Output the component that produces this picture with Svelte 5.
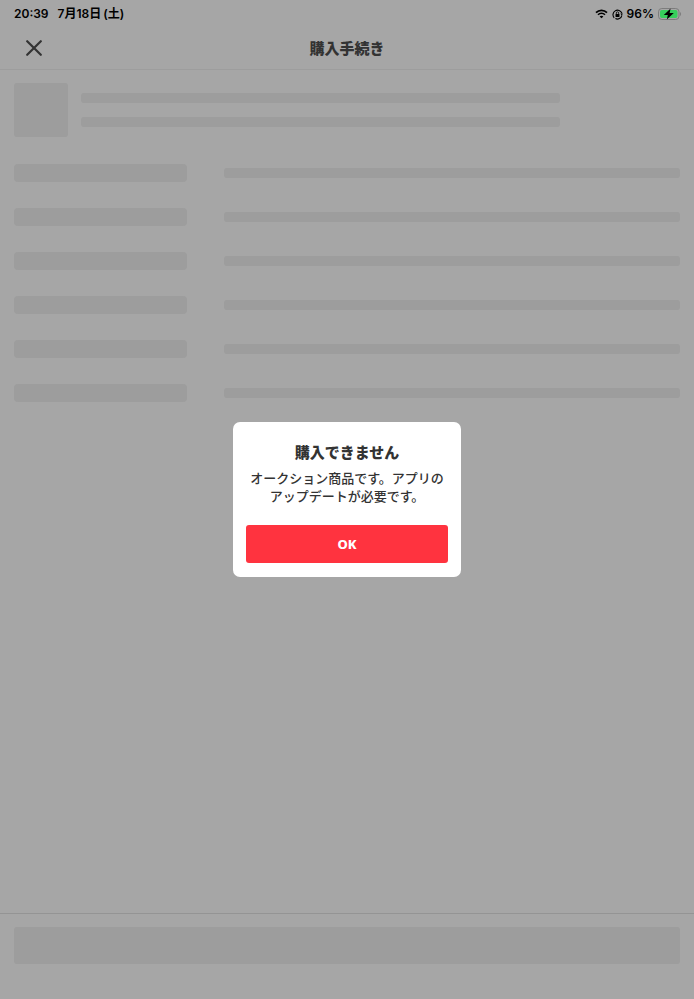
<script>
    let open = $state(true);

    const rows = [1, 2, 3, 4, 5, 6];
</script>

<div class="screen">
    <div class="status-bar">
        <div class="status-left">
            <span>20:39</span>
            <span>7月18日&thinsp;(土)</span>
        </div>
        <div class="status-right">
            <svg width="13" height="10" viewBox="0 0 13 10" aria-hidden="true">
                <path d="M1 3.6 C4 0.5 9 0.5 12 3.6" fill="none" stroke="#000" stroke-width="1.7" />
                <path d="M3 5.8 C5 3.8 8 3.8 10 5.8" fill="none" stroke="#000" stroke-width="1.6" />
                <path d="M6.5 9.3 L4.6 7.4 C5.6 6.4 7.4 6.4 8.4 7.4 Z" />
            </svg>
            <svg width="11" height="11" viewBox="0 0 11 11" aria-hidden="true">
                <path d="M2.2 8.9 A4.6 4.6 0 1 1 9.9 4.2 M9.9 6.4 A4.6 4.6 0 0 1 3.4 9.6" fill="none" stroke="#000" stroke-width="1.1" />
                <path d="M8.3 4.6 L10.9 4.6 L9.8 6.6 Z" />
                <rect x="3.5" y="4.9" width="4" height="3.1" rx="0.4" />
                <path d="M4.3 5 V4 A1.2 1.2 0 0 1 6.7 4 V5" fill="none" stroke="#000" stroke-width="0.8" />
            </svg>
            <span>96%</span>
            <svg class="battery" width="24" height="12" viewBox="0 0 24 12" aria-hidden="true">
                <rect x="0.5" y="0.5" width="20.5" height="11" rx="3.3" fill="none" stroke="#7c7c7c" />
                <rect x="2" y="2" width="17.5" height="8" rx="1.9" fill="#36cf5c" />
                <path d="M22 4 C23.4 4.5 23.4 7.5 22 8 Z" fill="#7c7c7c" />
                <path d="M12.6 0.6 L5.8 6.9 H9.8 L8.8 11.6 L15.8 5.1 H11.6 Z" />
            </svg>
        </div>
    </div>

    <header>
        <button class="close" aria-label="閉じる">
            <svg width="16" height="16" viewBox="0 0 16 16" aria-hidden="true">
                <path d="M1.2 1.2 L14.8 14.8 M14.8 1.2 L1.2 14.8" stroke="#333" stroke-width="2.2" stroke-linecap="round" />
            </svg>
        </button>
        <h1>購入手続き</h1>
    </header>

    <main>
        <div class="item">
            <div class="thumb"></div>
            <div class="item-lines">
                <div class="bar"></div>
                <div class="bar"></div>
            </div>
        </div>

        {#each rows as row (row)}
            <div class="row">
                <div class="label"></div>
                <div class="bar value"></div>
            </div>
        {/each}
    </main>

    <footer>
        <div class="submit"></div>
    </footer>
</div>

{#if open}
    <div class="overlay">
        <div class="dialog" role="alertdialog" aria-modal="true" aria-labelledby="dialog-title" aria-describedby="dialog-text">
            <h2 id="dialog-title">購入できません</h2>
            <p id="dialog-text">オークション商品です。アプリの<br />アップデートが必要です。</p>
            <button class="ok" onclick={() => (open = false)}>OK</button>
        </div>
    </div>
{/if}

<style>
    :global(body) {
        background: #a6a6a6;
    }

    .screen,
    .overlay {
        font-family: Inter, "Noto Sans CJK JP", sans-serif;
        color: #333;
    }

    .screen {
        display: flex;
        flex-direction: column;
        min-height: 100vh;
        background: #a6a6a6;
    }

    .status-bar {
        display: flex;
        justify-content: space-between;
        align-items: center;
        height: 28px;
        padding: 0 12px 0 14px;
        color: #000;
        font-size: 12px;
        font-weight: 600;
        line-height: 16px;
    }

    .status-left {
        display: flex;
        gap: 9px;
    }

    .status-right {
        display: flex;
        align-items: center;
        gap: 4px;
    }

    header {
        display: grid;
        grid-template-columns: 40px 1fr 40px;
        align-items: center;
        height: 39px;
        padding: 0 14px 2px;
        border-bottom: 1px solid #9d9d9d;
    }

    h1,
    h2 {
        margin: 0;
        font-family: "Noto Sans CJK JP", sans-serif;
        font-size: 15px;
        font-weight: 900;
        line-height: 20px;
        text-align: center;
    }

    .close {
        display: flex;
        justify-content: center;
        padding: 8px;
        border: none;
        background: none;
        cursor: pointer;
    }

    main {
        flex: 1;
        padding: 13px 14px;
    }

    .item {
        display: flex;
        align-items: center;
        gap: 13px;
        margin-bottom: 14px;
    }

    .thumb {
        width: 54px;
        height: 54px;
        border-radius: 3px;
        background: #9d9d9d;
    }

    .item-lines {
        flex: 1;
        display: flex;
        flex-direction: column;
        gap: 14px;
    }

    .bar {
        height: 10px;
        border-radius: 3px;
        background: #9d9d9d;
    }

    .item-lines .bar {
        width: 80%;
    }

    .row {
        display: flex;
        align-items: center;
        gap: 37px;
        height: 44px;
    }

    .label {
        width: 26%;
        height: 18px;
        border-radius: 4px;
        background: #9d9d9d;
    }

    .value {
        flex: 1;
    }

    footer {
        padding: 13px 14px 35px;
        border-top: 1px solid #949494;
    }

    .submit {
        height: 37px;
        border-radius: 3px;
        background: #9d9d9d;
    }

    .overlay {
        position: fixed;
        inset: 0;
        display: flex;
        align-items: center;
        justify-content: center;
    }

    .dialog {
        box-sizing: border-box;
        width: 228px;
        padding: 20px 13px 14px;
        border-radius: 7px;
        background: #fff;
        text-align: center;
    }

    p {
        margin: 7px 0 20px;
        font-size: 13px;
        font-weight: 500;
        line-height: 18px;
        white-space: nowrap;
    }

    .ok {
        width: 100%;
        height: 38px;
        border: none;
        border-radius: 3px;
        background: #ff333f;
        color: #fff;
        font-family: "Noto Sans", "Noto Sans CJK JP", sans-serif;
        font-size: 13px;
        font-weight: 800;
        cursor: pointer;
    }
</style>
